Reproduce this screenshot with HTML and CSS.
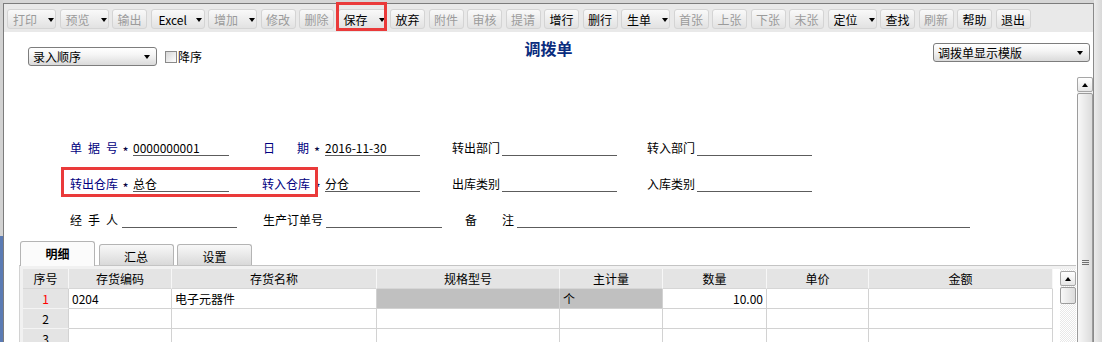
FILE: index.html
```html
<!DOCTYPE html>
<html lang="zh-CN">
<head>
<meta charset="utf-8">
<title>调拨单</title>
<link rel="stylesheet" href="styles.css">
</head>
<body>
<div class="app">
  <div class="edge-left"></div>
  <div class="window">
    <div class="toolbar">
      <div class="btn drop dis">打印<i class="caret"></i></div>
      <div class="btn drop dis">预览<i class="caret"></i></div>
      <div class="btn dis">输出</div>
      <div class="btn drop xl">Excel<i class="caret"></i></div>
      <div class="btn drop dis">增加<i class="caret"></i></div>
      <div class="btn dis">修改</div>
      <div class="btn dis">删除</div>
      <div class="btn drop">保存<i class="caret"></i><span class="mark"></span></div>
      <div class="btn">放弃</div>
      <div class="btn dis">附件</div>
      <div class="btn dis">审核</div>
      <div class="btn dis">提请</div>
      <div class="btn">增行</div>
      <div class="btn">删行</div>
      <div class="btn drop">生单<i class="caret"></i></div>
      <div class="btn dis">首张</div>
      <div class="btn dis">上张</div>
      <div class="btn dis">下张</div>
      <div class="btn dis">末张</div>
      <div class="btn drop">定位<i class="caret"></i></div>
      <div class="btn">查找</div>
      <div class="btn dis">刷新</div>
      <div class="btn">帮助</div>
      <div class="btn">退出</div>
    </div>

    <div class="head">
      <div class="head-left">
        <div class="select sel-order"><span>录入顺序</span><i class="caret"></i></div>
        <label class="chk"><span class="box"></span>降序</label>
      </div>
      <div class="title">调拨单</div>
      <div class="head-right">
        <div class="select sel-tpl"><span>调拨单显示模版</span><i class="caret"></i></div>
      </div>
    </div>

    <div class="scrollwrap">
      <div class="content">
        <div class="form">
          <div class="row">
            <div class="g1">
              <span class="lbl req sp w48"><span>单</span><span>据</span><span>号</span></span>
              <span class="star">*</span>
              <span class="fld w96">0000000001</span>
            </div>
            <div class="g2">
              <span class="lbl req sp w46 ml1"><span>日</span><span>期</span></span>
              <span class="star w16">*</span>
              <span class="fld w95">2016-11-30</span>
            </div>
            <div class="g3">
              <span class="lbl w48">转出部门</span>
              <span class="fld w115 ml2"></span>
            </div>
            <div class="g4">
              <span class="lbl w48">转入部门</span>
              <span class="fld w115 ml2"></span>
            </div>
          </div>
          <div class="row">
            <div class="g1">
              <span class="lbl req w48">转出仓库</span>
              <span class="star">*</span>
              <span class="fld w96">总仓</span>
            </div>
            <div class="g2">
              <span class="lbl req w48">转入仓库</span>
              <span class="star">*</span>
              <span class="fld w95">分仓</span>
            </div>
            <div class="g3">
              <span class="lbl w48">出库类别</span>
              <span class="fld w115 ml2"></span>
            </div>
            <div class="g4">
              <span class="lbl w48">入库类别</span>
              <span class="fld w115 ml2"></span>
            </div>
          </div>
          <div class="row">
            <div class="g1">
              <span class="lbl sp w48"><span>经</span><span>手</span><span>人</span></span>
              <span class="fld w115 ml4"></span>
            </div>
            <div class="g2">
              <span class="lbl ml1">生产订单号</span>
              <span class="fld w116 ml3"></span>
            </div>
            <div class="g3 wide">
              <span class="lbl sp w49 ml13"><span>备</span><span>注</span></span>
              <span class="fld w453 ml3"></span>
            </div>
          </div>
          <span class="mark mark-wh"></span>
        </div>

        <div class="tabs">
          <div class="tab on">明细</div>
          <div class="tab">汇总</div>
          <div class="tab">设置</div>
        </div>

        <div class="panel">
          <div class="gridwrap">
            <div class="grid">
              <div class="h">序号</div>
              <div class="h">存货编码</div>
              <div class="h">存货名称</div>
              <div class="h">规格型号</div>
              <div class="h">主计量</div>
              <div class="h">数量</div>
              <div class="h">单价</div>
              <div class="h">金额</div>

              <div class="n red">1</div>
              <div>0204</div>
              <div>电子元器件</div>
              <div class="gray"></div>
              <div class="gray">个</div>
              <div class="r">10.00</div>
              <div></div>
              <div></div>

              <div class="n">2</div>
              <div></div><div></div><div></div><div></div><div></div><div></div><div></div>

              <div class="n">3</div>
              <div></div><div></div><div></div><div></div><div></div><div></div><div></div>
            </div>
          </div>
          <div class="gsb">
            <div class="sb-up"><i class="up-tri"></i></div>
            <div class="sb-thumb small"></div>
          </div>
        </div>
      </div>

      <div class="vsb">
        <div class="sb-up"><i class="up-tri"></i></div>
        <div class="sb-thumb big"><i class="grip"></i></div>
      </div>
    </div>
  </div>
  <div class="edge-right"></div>
</div>
</body>
</html>
```

FILE: styles.css
```css
* { box-sizing: border-box; }
html, body { margin: 0; padding: 0; }
body {
  width: 1102px;
  height: 342px;
  overflow: hidden;
  font-family: "Noto Sans CJK SC", "Noto Sans", sans-serif;
  font-size: 12px;
  color: #000;
  background: #d6d6d6;
}
.app { display: flex; height: 342px; }
.edge-left {
  width: 3px;
  flex: none;
  background: linear-gradient(#d2d2d2 0 236px, #5b7bb4 236px);
}
.window {
  width: 1091px;
  flex: none;
  margin-top: 3px;
  border-top: 1px solid #7c7c7c;
  border-left: 1px solid #7c7c7c;
  border-right: 1px solid #8a8a8a;
  background: #fff;
  display: flex;
  flex-direction: column;
}
.edge-right { flex: 1; background: linear-gradient(to right, #ececec, #d8d8d8); }

/* toolbar */
.toolbar {
  height: 28px;
  flex: none;
  display: flex;
  gap: 3.5px;
  padding: 5px 0 3px 3px;
  background: #e9e9e9;
}
.btn {
  flex: none;
  position: relative;
  width: 35px;
  height: 20px;
  border: 1px solid #d4d4d4;
  border-radius: 3px;
  background: linear-gradient(#f9f9f9, #e2e2e2);
  display: flex;
  align-items: center;
  justify-content: center;
  padding-top: 1px;
  line-height: 14px;
  white-space: nowrap;
}
.btn.dis { color: #9b9b9b; }
.btn.drop { width: 49px; justify-content: flex-start; padding-left: 5px; }
.btn.xl { width: 54px; padding-left: 7px; }
.caret {
  display: inline-block;
  width: 0;
  height: 0;
  border-left: 3.5px solid transparent;
  border-right: 3.5px solid transparent;
  border-top: 4px solid #000;
  margin-left: 11px;
}
.btn.xl .caret { margin-left: 9px; }
.mark {
  position: absolute;
  left: -3px;
  top: -8px;
  right: -1px;
  bottom: -3px;
  border: 3px solid #ea3a3a;
  pointer-events: none;
}

/* header */
.head {
  height: 43px;
  flex: none;
  display: grid;
  grid-template-columns: 1fr auto 1fr;
}
.head-left { display: flex; align-items: flex-start; padding-left: 24px; }
.head-right { display: flex; justify-content: flex-end; align-items: flex-start; padding-right: 3px; }
.select {
  display: flex;
  align-items: center;
  height: 19px;
  border: 1px solid #7d7d7d;
  border-radius: 3px;
  background: linear-gradient(#ffffff 0%, #f5f5f5 40%, #dadada 100%);
  padding: 0 6px 0 4px;
  line-height: 14px;
  white-space: nowrap;
}
.select span { flex: 1; }
.select .caret { margin-left: 0; }
.sel-order { width: 129px; margin-top: 15px; }
.sel-tpl { width: 157px; margin-top: 11px; }
.chk { display: flex; align-items: center; height: 19px; margin: 15px 0 0 8px; }
.box {
  width: 12px;
  height: 12px;
  border: 1px solid #8a8a8a;
  background: linear-gradient(135deg, #d6d6d6, #ffffff);
  margin-right: 1px;
}
.title {
  margin-top: 7px;
  font-size: 16px;
  font-weight: 700;
  line-height: 18px;
  color: #0b2d7e;
}

/* scroll area */
.scrollwrap { flex: 1; min-height: 0; display: flex; overflow: hidden; }
.content { flex: 1; padding-top: 66px; }
.vsb {
  width: 16px;
  flex: none;
  padding-top: 2px;
  background: linear-gradient(#fff 0 2px, #f1f1f1 2px);
  display: flex;
  flex-direction: column;
}
.sb-up {
  height: 15px;
  flex: none;
  border: 1px solid #a6a6a6;
  border-radius: 2px;
  background: linear-gradient(#ffffff, #e6e6e6);
  display: flex;
  align-items: center;
  justify-content: center;
}
.up-tri {
  width: 0;
  height: 0;
  border-left: 3.5px solid transparent;
  border-right: 3.5px solid transparent;
  border-bottom: 4px solid #000;
}
.sb-thumb {
  flex: none;
  margin-top: 1px;
  border: 1px solid #9c9c9c;
  border-radius: 2px;
  background: linear-gradient(to right, #f8f8f8, #dcdcdc);
  display: flex;
  align-items: center;
  justify-content: center;
}
.sb-thumb.big { height: 338px; }
.sb-thumb.small { height: 17px; }
.grip {
  width: 7px;
  height: 5px;
  background: repeating-linear-gradient(#707070 0 1px, transparent 1px 2px);
}

/* form */
.form { position: relative; padding-left: 66px; }
.row { display: flex; height: 15px; margin-bottom: 21px; line-height: 14px; }
.row:last-of-type { margin-bottom: 0; }
.g1, .g2, .g3, .g4 { display: flex; flex: none; }
.g1 { width: 192px; }
.g2 { width: 190px; }
.g3 { width: 195px; }
.g3.wide { width: auto; }
.lbl { height: 14px; white-space: nowrap; flex: none; }
.req { color: #000080; }
.sp { display: flex; justify-content: space-between; }
.star { width: 15px; flex: none; text-align: center; padding-top: 4px; font-size: 13px; line-height: 13px; color: #000040; }
.fld { height: 15px; flex: none; border-bottom: 1px solid #5c5c5c; white-space: nowrap; }
.w16 { width: 16px; }
.w46 { width: 46px; }
.w48 { width: 48px; }
.w49 { width: 49px; }
.w95 { width: 95px; }
.w96 { width: 96px; }
.w115 { width: 115px; }
.w116 { width: 116px; }
.w453 { width: 453px; }
.ml1 { margin-left: 1px; }
.ml2 { margin-left: 2px; }
.ml3 { margin-left: 3px; }
.ml4 { margin-left: 4px; }
.ml13 { margin-left: 13px; }
.mark-wh { left: 57px; top: 26px; right: auto; bottom: auto; width: 257px; height: 30px; }

/* tabs */
.tabs {
  position: relative;
  z-index: 1;
  display: flex;
  align-items: flex-end;
  height: 24px;
  margin-top: 13px;
  padding-left: 16px;
}
.tab {
  width: 75px;
  height: 21px;
  margin-left: 3.5px;
  border: 1px solid #b4b4b4;
  border-bottom: none;
  border-radius: 3px 3px 0 0;
  background: linear-gradient(#f8f8f8, #d9d9d9);
  display: flex;
  align-items: center;
  justify-content: center;
  padding-top: 4px;
  line-height: 14px;
}
.tab.on {
  height: 25px;
  margin-left: 0;
  margin-bottom: -1px;
  padding-top: 0;
  background: #fbfbfb;
  font-weight: 700;
}

/* panel & grid */
.panel {
  margin-left: 15px;
  width: 1057px;
  border-top: 1px solid #c4c4c4;
  border-left: 1px solid #d2d2d2;
  background: #f1f1f1;
  padding: 3px 0 0 3px;
  display: flex;
  align-items: flex-start;
}
.gridwrap { width: 1037px; flex: none; background: #fff; }
.grid {
  display: grid;
  grid-template-columns: 46px 103px 205px 183px 103px 104px 102px 184px;
  grid-auto-rows: 20px;
}
.grid > div {
  border-right: 1px solid #d2d2d2;
  border-bottom: 1px solid #d2d2d2;
  padding: 0 3px;
  line-height: 19px;
  white-space: nowrap;
}
.grid > .h { background: #e4e4e4; text-align: center; border-right-color: #f7f7f7; border-bottom-color: #d6d6d6; }
.grid > .n { background: #e4e4e4; text-align: center; border-bottom-color: #f4f4f4; }
.grid > .red { color: #f00; }
.grid > .gray { background: #c0c0c0; }
.grid > .r { text-align: right; }
.gsb {
  width: 16px;
  flex: none;
  height: 80px;
  padding-top: 2px;
  background: repeating-conic-gradient(#ffffff 0 25%, #e8e8e8 0 50%) 0 0 / 2px 2px;
  display: flex;
  flex-direction: column;
}
```
